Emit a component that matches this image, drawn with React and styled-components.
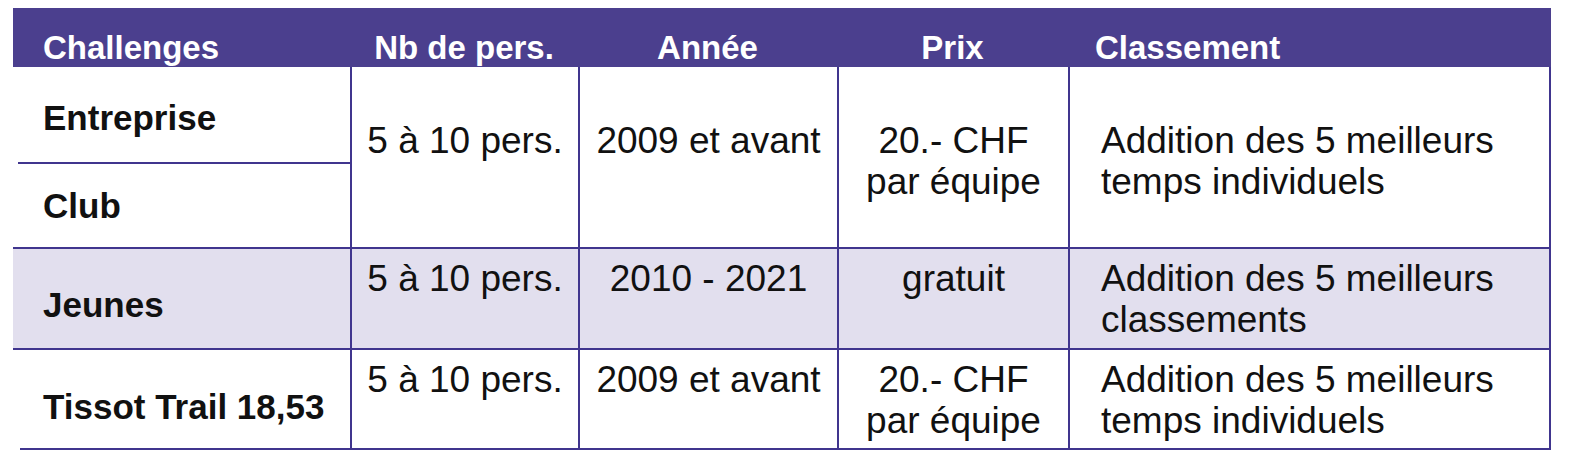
import React from "react";
import styled, { createGlobalStyle } from "styled-components";

const Global = createGlobalStyle`
  html, body {
    margin: 0;
    background: #ffffff;
  }
`;

const line = "#40358e";

const Table = styled.div`
  display: grid;
  grid-template-columns: 337px 228px 259px 231px 483px;
  grid-template-rows: 59px 97px 85px 101px 100px;
  margin: 8px 0 0 13px;
  width: 1538px;
  font-family: "Liberation Sans", Arial, sans-serif;
  color: #111;
`;

const Head = styled.div`
  background: #4b3f8e;
  color: #fff;
  font-size: 33px;
  font-weight: 700;
  display: flex;
  align-items: center;
  justify-content: ${(p) => (p.$left ? "flex-start" : "center")};
  padding: 20px 0 0 ${(p) => (p.$left ? p.$left : 0)}px;
  box-sizing: border-box;
`;

const Name = styled.div`
  grid-column: 1;
  grid-row: ${(p) => p.$row};
  background: ${(p) => (p.$shade ? "#e2dfee" : "#fff")};
  border-bottom: 2px solid ${line};
  margin-left: ${(p) => p.$inset || 0}px;
  font-size: 35px;
  font-weight: 700;
  display: flex;
  align-items: center;
  padding: ${(p) => p.$shift || 0}px 0 0 ${(p) => 30 - (p.$inset || 0)}px;
  box-sizing: border-box;
`;

const Cell = styled.div`
  grid-column: ${(p) => p.$col};
  grid-row: ${(p) => p.$row} / span ${(p) => p.$span || 1};
  background: ${(p) => (p.$shade ? "#e2dfee" : "#fff")};
  border-bottom: 2px solid ${line};
  border-left: 2px solid ${line};
  border-right: ${(p) => (p.$last ? `2px solid ${line}` : "none")};
  font-size: 37px;
  line-height: 41px;
  text-align: ${(p) => (p.$last ? "left" : "center")};
  padding: ${(p) => (p.$span ? 53 : 9)}px 0 0 ${(p) => (p.$last ? 31 : 0)}px;
  box-sizing: border-box;
  white-space: nowrap;
`;

const rows = [
  {
    row: 4,
    shade: true,
    nb: "5 à 10 pers.",
    year: "2010 - 2021",
    price: ["gratuit"],
    rank: ["Addition des 5 meilleurs", "classements"],
  },
  {
    row: 5,
    nb: "5 à 10 pers.",
    year: "2009 et avant",
    price: ["20.- CHF", "par équipe"],
    rank: ["Addition des 5 meilleurs", "temps individuels"],
  },
];

const Lines = ({ items }) =>
  items.map((t, i) => (
    <React.Fragment key={i}>
      {i > 0 && <br />}
      {t}
    </React.Fragment>
  ));

export default function App() {
  return (
    <>
      <Global />
      <Table>
        <Head $left={30}>Challenges</Head>
        <Head>Nb de pers.</Head>
        <Head>Année</Head>
        <Head>Prix</Head>
        <Head $left={27}>Classement</Head>

        <Name $row={2} $inset={5} $shift={6}>Entreprise</Name>
        <Name $row={3} $shift={0}>Club</Name>
        <Name $row={4} $shade $shift={12}>Jeunes</Name>
        <Name $row={5} $inset={7} $shift={16}>Tissot Trail 18,53</Name>

        <Cell $col={2} $row={2} $span={2}>5 à 10 pers.</Cell>
        <Cell $col={3} $row={2} $span={2}>2009 et avant</Cell>
        <Cell $col={4} $row={2} $span={2}>
          <Lines items={["20.- CHF", "par équipe"]} />
        </Cell>
        <Cell $col={5} $row={2} $span={2} $last>
          <Lines items={["Addition des 5 meilleurs", "temps individuels"]} />
        </Cell>

        {rows.map((r) => (
          <React.Fragment key={r.row}>
            <Cell $col={2} $row={r.row} $shade={r.shade}>{r.nb}</Cell>
            <Cell $col={3} $row={r.row} $shade={r.shade}>{r.year}</Cell>
            <Cell $col={4} $row={r.row} $shade={r.shade}>
              <Lines items={r.price} />
            </Cell>
            <Cell $col={5} $row={r.row} $shade={r.shade} $last>
              <Lines items={r.rank} />
            </Cell>
          </React.Fragment>
        ))}
      </Table>
    </>
  );
}
